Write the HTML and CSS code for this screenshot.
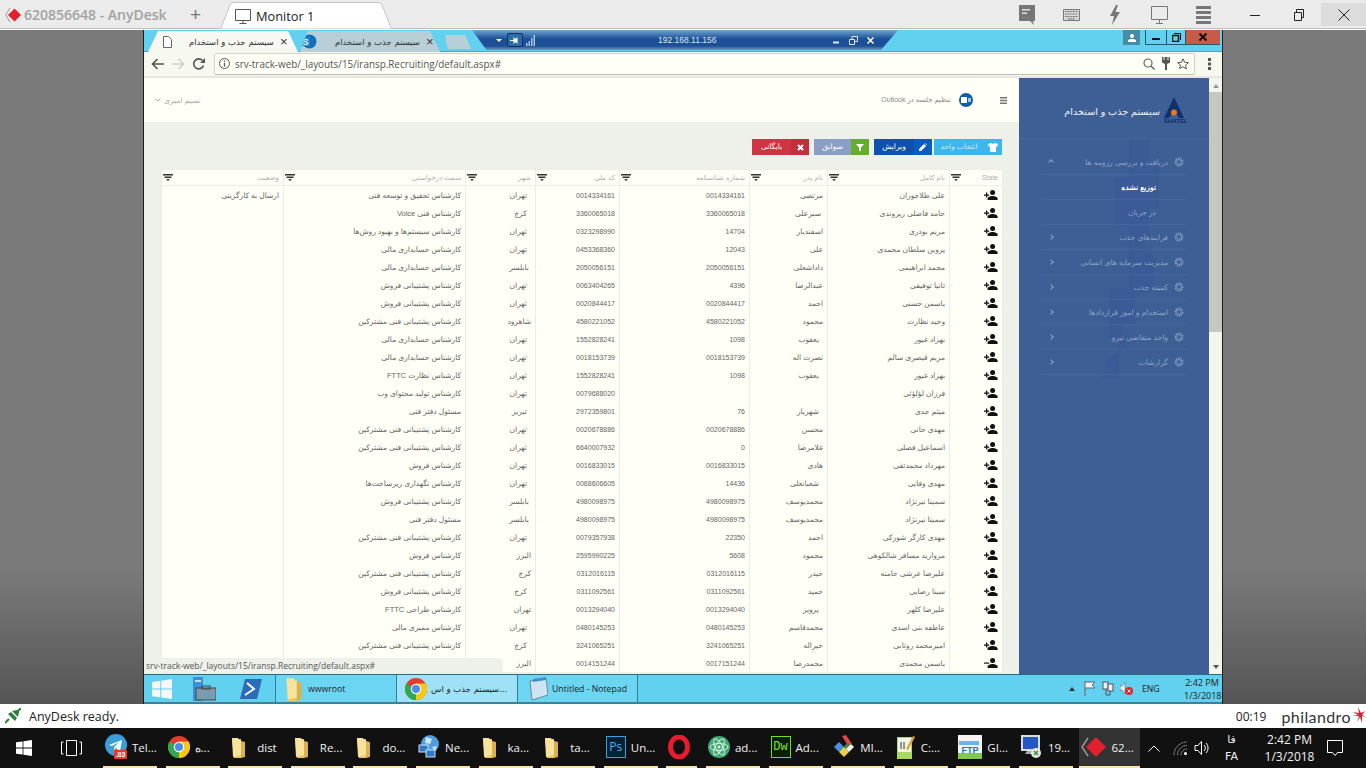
FILE: index.html
```html
<!DOCTYPE html>
<html lang="fa">

<head>
    <meta charset="UTF-8">
    <title>620856648 - AnyDesk</title>
    <link rel="stylesheet" href="styles.css">
</head>

<body>
    <svg class="defs" width="0" height="0">
        <symbol id="add" viewBox="0 0 14 10">
            <circle cx="8.6" cy="2.6" r="2.5" />
            <path d="M3.6 10V8.6c0-1.7 3.3-2.6 5-2.6s5 .9 5 2.6V10z" />
            <path d="M2 2.6h1.3v1.9h1.9v1.2H3.3v1.9H2V5.7H0V4.5h2z" />
        </symbol>
        <symbol id="remove" viewBox="0 0 14 10">
            <circle cx="8.6" cy="2.6" r="2.5" />
            <path d="M3.6 10V8.6c0-1.7 3.3-2.6 5-2.6s5 .9 5 2.6V10z" />
            <path d="M0 4.5h5.2v1.2H0z" />
        </symbol>
        <symbol id="funnel" viewBox="0 0 10 7">
            <path d="M0 0h10v1.5H0zM1.5 2.5h7V4h-7zM3.5 5h3v.8H5.600V7H4.400V5.800h-.9z" />
        </symbol>
        <symbol id="gear" viewBox="0 0 10 10">
            <circle cx="5" cy="5" r="3.6" fill="none" stroke="#8ea2c6" stroke-width="1.6" stroke-dasharray="1.3 .9" />
            <circle cx="5" cy="5" r="2.3" fill="none" stroke="#8ea2c6" stroke-width=".7" />
        </symbol>
        <symbol id="folder" viewBox="0 0 15 21">
            <path d="M1 2h9v19H3z" fill="#e9c766" />
            <path d="M1 1h6l1 2h2v15L2 20z" fill="#f7e39c" />
            <path d="M10 4l4 1v15l-4 1z" fill="#d9b24e" />
        </symbol>
        <symbol id="chrome" viewBox="0 0 24 24">
            <circle cx="12" cy="12" r="12" fill="#e33b2e" />
            <path d="M12 12L1.6 6A12 12 0 0 0 12 24z" fill="#2fa84f" />
            <path d="M12 12V24A12 12 0 0 0 22.4 6z" fill="#fbc80e" />
            <path d="M12 6h10.400A12 12 0 0 1 22.8 10L12 12z" fill="#fbc80e" />
            <circle cx="12" cy="12" r="5.7" fill="#fff" />
            <circle cx="12" cy="12" r="4.4" fill="#4a8bf0" />
        </symbol>
        <symbol id="winlogo" viewBox="0 0 16 16">
            <path d="M0 2.3l6.6-.9v6.2H0zM7.400 1.300L16 0v7.600H7.400zM0 8.400h6.600v6.200L0 13.700zM7.400 8.400H16V16l-8.600-1.300z" />
        </symbol>
    </svg>

    <div class="topbar">
        <div class="ad-title">
            <svg class="ad-logo" width="16" height="16" viewBox="0 0 16 16">
                <path d="M5 1L.7 8 5 15" fill="none" stroke="#999" />
                <path d="M9.5 1.5L16 8l-6.500 6.500L3 8z" fill="#e0202c" />
            </svg>
            <span>620856648 - AnyDesk</span>
        </div>
        <span class="ad-plus">+</span>
        <div class="ad-tab">
            <svg class="ad-tab-bg" width="172" height="27" viewBox="0 0 172 27">
                <path d="M.5 27L10 3q1-2.500 4-2.500h144q3 0 4 2.500l9.500 24z" fill="#fff" stroke="#c4c4c4" />
            </svg>
            <svg class="ad-tab-icon" width="16" height="16" viewBox="0 0 16 16">
                <path d="M.5 1.500h15v11H.5zM8 12.500V15M4.500 15.500h7" fill="none" stroke="#555" />
            </svg>
            <span>Monitor 1</span>
        </div>
        <div class="ad-tools">
            <svg width="16" height="20" viewBox="0 0 16 20">
                <path d="M0 0h16v16h-2l1 4-4-4H0z" fill="#777" />
                <path d="M3 4h8v1.500H3zM3 7.500h5V9H3z" fill="#ddd" />
            </svg>
            <svg width="17" height="12" viewBox="0 0 17 12">
                <path d="M.5.500h16v11H.5z" fill="#d8d8d8" stroke="#777" />
                <path d="M2 2.500h13M2 5h13M2 7.500h13M5 9.800h7" stroke="#666" stroke-dasharray="1 .6" stroke-width="1.2" />
            </svg>
            <svg width="10" height="20" viewBox="0 0 10 20">
                <path d="M6 0L0 11h4l-2 9 8-13H5.500L8 0z" fill="#777" />
            </svg>
            <svg width="17" height="18" viewBox="0 0 17 18">
                <path d="M.5.500h16v13H.5zM8.500 13.500V17M5 17.500h7" fill="none" stroke="#777" />
            </svg>
            <svg width="15" height="18" viewBox="0 0 15 18">
                <path d="M0 0h15v3H0zM0 5h15v3H0zM0 10h15v3H0zM0 15h15v3H0z" fill="#777" />
            </svg>
        </div>
        <div class="ad-win">
            <span class="wbtn"><svg width="10" height="10"><path d="M0 5.500h10" stroke="#222" /></svg></span>
            <span class="wbtn"><svg width="10" height="12" viewBox="0 0 10 12"><path d="M.5 3.500h7v8h-7zM2.500 3.500V.5h7v8H7.500" fill="none" stroke="#222" /></svg></span>
            <span class="wbtn wclose"><svg width="12" height="12"><path d="M.5.500l11 11M11.500.500l-11 11" stroke="#222" /></svg></span>
        </div>
    </div>

    <div class="desk">
        <div class="gray gray-left"></div>
        <div class="remote">
            <div class="strip">
                <div class="tab tab-on">
                    <svg width="9" height="12" viewBox="0 0 9 12">
                        <path d="M.5.500h5l3 3v8h-8z" fill="#fff" stroke="#666" />
                    </svg>
                    <span class="tab-text" dir="rtl">سیستم جذب و استخدام</span>
                    <span class="tab-x">×</span>
                </div>
                <div class="tab tab-off">
                    <svg width="17" height="15" viewBox="0 0 17 15">
                        <circle cx="9.5" cy="7.5" r="7" fill="#0f6fb8" />
                        <rect x="1" y="3" width="9" height="9" fill="#1e86cc" />
                        <text x="5.5" y="10.500" class="t-sp">S</text>
                    </svg>
                    <span class="tab-text" dir="rtl">سیستم جذب و استخدام</span>
                    <span class="tab-x">×</span>
                </div>
                <div class="tab-new"></div>
                <div class="rdp">
                    <span class="rdp-down"></span>
                    <span class="rdp-pin">
                        <svg width="11" height="9" viewBox="0 0 11 9"><path d="M0 4h3.500V1l2 2 2-2v7l-2-2-2 2V5H0zM8 4.500h3" fill="#fff" /></svg>
                    </span>
                    <svg class="rdp-signal" width="9" height="11" viewBox="0 0 9 11">
                        <path d="M0 8h1.500v3H0zM2.500 6H4v5H2.500zM5 3h1.500v8H5zM7.500 0H9v11H7.500z" fill="#a8c8e8" />
                    </svg>
                    <span class="rdp-ip">192.168.11.156</span>
                    <span class="rdp-btns">
                        <svg width="7" height="7"><path d="M0 5.500h6" stroke="#dfe8f4" stroke-width="2" /></svg>
                        <svg width="9" height="9" viewBox="0 0 9 9"><path d="M.5 3.500h5v5h-5zM3 3V.5h5.500v5H6" fill="none" stroke="#dfe8f4" /></svg>
                        <svg width="7" height="7"><path d="M.5.500l6 6M6.500.500l-6 6" stroke="#fff" stroke-width="1.5" /></svg>
                    </span>
                </div>
                <div class="user-btn">
                    <svg width="8" height="8" viewBox="0 0 8 8"><circle cx="4" cy="2" r="2" fill="#fff" /><path d="M0 8V6.500c0-1 2-1.500 4-1.500s4 .5 4 1.500V8z" fill="#fff" /></svg>
                </div>
                <div class="srv-btns">
                    <span class="srv-btn srv-min"><svg width="8" height="8"><path d="M0 6h8" stroke="#111" stroke-width="2" /></svg></span>
                    <span class="srv-btn srv-max"><svg width="9" height="9" viewBox="0 0 9 9"><path d="M.5 2.500h6v6h-6z" fill="none" stroke="#111" stroke-width="1.5" /><path d="M2 .5h6.500V7" fill="none" stroke="#111" /></svg></span>
                    <span class="srv-btn srv-close"><svg width="8" height="8"><path d="M.5.500l7 7M7.500.500l-7 7" stroke="#111" stroke-width="2" /></svg></span>
                </div>
            </div>

            <div class="addr">
                <svg class="nav" width="13" height="12" viewBox="0 0 13 12"><path d="M13 6H2M6.500 1L1.500 6l5 5" fill="none" stroke="#555" stroke-width="1.6" /></svg>
                <svg class="nav" width="13" height="12" viewBox="0 0 13 12"><path d="M0 6h11M6.500 1l5 5-5 5" fill="none" stroke="#cfd2c8" stroke-width="1.6" /></svg>
                <svg class="nav" width="12" height="12" viewBox="0 0 12 12"><path d="M10.500 7.500A5 5 0 1 1 9.500 2.500" fill="none" stroke="#555" stroke-width="1.6" /><path d="M7 5h5V0z" fill="#555" /></svg>
                <div class="url">
                    <svg width="11" height="11" viewBox="0 0 11 11"><circle cx="5.5" cy="5.5" r="5" fill="none" stroke="#555" /><path d="M5.500 2.500v1.200M5.500 4.800v3.600" stroke="#555" stroke-width="1.2" /></svg>
                    <span class="url-text">srv-track-web/_layouts/15/iransp.Recruiting/default.aspx#</span>
                    <span class="url-icons">
                        <svg width="12" height="12" viewBox="0 0 12 12"><circle cx="5" cy="5" r="4" fill="none" stroke="#666" stroke-width="1.2" /><path d="M8 8l3.500 3.500" stroke="#666" stroke-width="1.5" /></svg>
                        <svg width="8" height="13" viewBox="0 0 8 13"><path d="M0 0h1.500v3h1V0h3v3h1V0H8v5.500L5 7v6H3V7L0 5.500z" fill="#555" /></svg>
                        <svg width="12" height="12" viewBox="0 0 12 12"><path d="M6 .8l1.600 3.500 3.800.4-2.800 2.500.8 3.800L6 8.700 2.600 10.600l.8-3.800L.6 4.700l3.800-.4z" fill="none" stroke="#555" /></svg>
                    </span>
                </div>
                <svg class="dots" width="3" height="12" viewBox="0 0 3 12"><path d="M0 0h3v3H0zM0 4.500h3v3H0zM0 9h3v3H0z" fill="#555" /></svg>
            </div>

            <div class="page">
                <div class="main">
                    <div class="head">
                        <div class="head-user" dir="rtl">
                            <span>نسیم امیری</span>
                            <svg width="6" height="4" viewBox="0 0 6 4"><path d="M.5.500L3 3 5.500.500" fill="none" stroke="#aaa" /></svg>
                        </div>
                        <div class="head-right">
                            <span class="head-meet" dir="rtl">تنظیم جلسه در Outlook</span>
                            <svg class="head-out" width="14" height="14" viewBox="0 0 14 14"><circle cx="7" cy="7" r="7" fill="#0f5fa8" /><rect x="2" y="4" width="6" height="6" fill="#fff" /><path d="M9 5h3v4H9z" fill="#9cc8ea" /></svg>
                            <svg class="head-burger" width="7" height="7" viewBox="0 0 7 7"><path d="M0 0h7v1.400H0zM0 2.800h7v1.400H0zM0 5.600h7V7H0z" fill="#777" /></svg>
                        </div>
                    </div>
                    <div class="content">
                        <div class="actions" dir="rtl">
                            <div class="act act-unit">
                                <span class="act-icon"><svg width="10" height="9" viewBox="0 0 10 9"><path d="M0 1l3-1 2 1 2-1 3 1-1 3-1-.5V9H2V3.500L1 4z" fill="#fff" /></svg></span>
                                <span class="act-text">انتخاب واحد</span>
                            </div>
                            <div class="act act-edit">
                                <span class="act-icon"><svg width="8" height="8" viewBox="0 0 8 8"><path d="M0 8V6l5-5 2 2-5 5zM5.700.3l.5-.3L8 1.800l-.3.500z" fill="#fff" /></svg></span>
                                <span class="act-text">ویرایش</span>
                            </div>
                            <div class="act act-hist">
                                <span class="act-icon"><svg width="8" height="7" viewBox="0 0 8 7"><path d="M0 0h8L5 3.500V7H3V3.500z" fill="#fff" /></svg></span>
                                <span class="act-text">سوابق</span>
                            </div>
                            <div class="act act-arch">
                                <span class="act-icon"><svg width="7" height="7" viewBox="0 0 7 7"><path d="M1 1l5 5M6 1L1 6" stroke="#fff" stroke-width="2" /></svg></span>
                                <span class="act-text">بایگانی</span>
                            </div>
                        </div>

                        <table class="grid" dir="rtl">
                            <colgroup>
                                <col class="c-state"><col class="c-name"><col class="c-father"><col class="c-id"><col class="c-code"><col class="c-city"><col class="c-job"><col class="c-status">
                            </colgroup>
                            <thead>
                                <tr>
                                    <th>State<svg class="funnel"><use href="#funnel" /></svg></th>
                                    <th>نام کامل<svg class="funnel"><use href="#funnel" /></svg></th>
                                    <th>نام پدر<svg class="funnel"><use href="#funnel" /></svg></th>
                                    <th>شماره شناسنامه<svg class="funnel"><use href="#funnel" /></svg></th>
                                    <th>کد ملی<svg class="funnel"><use href="#funnel" /></svg></th>
                                    <th>شهر<svg class="funnel"><use href="#funnel" /></svg></th>
                                    <th>سمت درخواستی<svg class="funnel"><use href="#funnel" /></svg></th>
                                    <th>وضعیت<svg class="funnel"><use href="#funnel" /></svg></th>
                                </tr>
                            </thead>
                            <tbody>
                                <tr><td><svg class="act-user"><use href="#add" /></svg></td><td>علی طلاجوران</td><td>مرتضی</td><td>0014334161</td><td>0014334161</td><td>&nbsp;&nbsp;تهران</td><td>کارشناس تحقیق و توسعه فنی</td><td>ارسال به کارگزینی</td></tr>
                                <tr><td><svg class="act-user"><use href="#add" /></svg></td><td>حامد فاضلی ریزوندی</td><td>&nbsp;سبزعلی</td><td>3360065018</td><td>3360065018</td><td>&nbsp;&nbsp;کرج</td><td>کارشناس فنی Voice</td><td></td></tr>
                                <tr><td><svg class="act-user"><use href="#add" /></svg></td><td>مریم بوذری</td><td>اسفندیار</td><td>14704</td><td>0323298990</td><td>&nbsp;&nbsp;تهران</td><td>کارشناس سیستم‌ها و بهبود روش‌ها</td><td></td></tr>
                                <tr><td><svg class="act-user"><use href="#add" /></svg></td><td>پروین سلطان محمدی</td><td>علی</td><td>12043</td><td>0453368360</td><td>&nbsp;&nbsp;تهران</td><td>کارشناس حسابداری مالی</td><td></td></tr>
                                <tr><td><svg class="act-user"><use href="#add" /></svg></td><td>محمد ابراهیمی</td><td>داداشعلی</td><td>2050056151</td><td>2050056151</td><td>&nbsp;بابلسر</td><td>کارشناس حسابداری مالی</td><td></td></tr>
                                <tr><td><svg class="act-user"><use href="#add" /></svg></td><td>تانیا توفیقی</td><td>عبدالرضا</td><td>4396</td><td>0063404265</td><td>&nbsp;&nbsp;تهران</td><td>کارشناس پشتیبانی فروش</td><td></td></tr>
                                <tr><td><svg class="act-user"><use href="#add" /></svg></td><td>یاسمن حسنی</td><td>احمد</td><td>0020844417</td><td>0020844417</td><td>&nbsp;&nbsp;تهران</td><td>کارشناس پشتیبانی فروش</td><td></td></tr>
                                <tr><td><svg class="act-user"><use href="#add" /></svg></td><td>وحید نظارت</td><td>محمود</td><td>4580221052</td><td>4580221052</td><td>شاهرود</td><td>کارشناس پشتیبانی فنی مشترکین</td><td></td></tr>
                                <tr><td><svg class="act-user"><use href="#add" /></svg></td><td>بهزاد غیور</td><td>&nbsp;&nbsp;یعقوب</td><td>1098</td><td>1552828241</td><td>&nbsp;&nbsp;تهران</td><td>کارشناس حسابداری مالی</td><td></td></tr>
                                <tr><td><svg class="act-user"><use href="#add" /></svg></td><td>مریم قیصری سالم</td><td>نصرت اله</td><td>0018153739</td><td>0018153739</td><td>&nbsp;&nbsp;تهران</td><td>کارشناس حسابداری مالی</td><td></td></tr>
                                <tr><td><svg class="act-user"><use href="#add" /></svg></td><td>بهزاد غیور</td><td>&nbsp;&nbsp;یعقوب</td><td>1098</td><td>1552828241</td><td>&nbsp;&nbsp;تهران</td><td>کارشناس نظارت FTTC</td><td></td></tr>
                                <tr><td><svg class="act-user"><use href="#add" /></svg></td><td>فرزان لؤلؤئی</td><td></td><td></td><td>0079688020</td><td>&nbsp;&nbsp;تهران</td><td>کارشناس تولید محتوای وب</td><td></td></tr>
                                <tr><td><svg class="act-user"><use href="#add" /></svg></td><td>میثم جدی</td><td>&nbsp;&nbsp;شهریار</td><td>76</td><td>2972359801</td><td>&nbsp;&nbsp;تبریز</td><td>مسئول دفتر فنی</td><td></td></tr>
                                <tr><td><svg class="act-user"><use href="#add" /></svg></td><td>مهدی خانی</td><td>محسن</td><td>0020678886</td><td>0020678886</td><td>&nbsp;&nbsp;تهران</td><td>کارشناس پشتیبانی فنی مشترکین</td><td></td></tr>
                                <tr><td><svg class="act-user"><use href="#add" /></svg></td><td>اسماعیل فضلی</td><td>غلامرضا</td><td>0</td><td>6640007932</td><td>&nbsp;&nbsp;تهران</td><td>کارشناس پشتیبانی فنی مشترکین</td><td></td></tr>
                                <tr><td><svg class="act-user"><use href="#add" /></svg></td><td>مهرداد محمدتقی</td><td>هادی</td><td>0016833015</td><td>0016833015</td><td>&nbsp;&nbsp;تهران</td><td>کارشناس فروش</td><td></td></tr>
                                <tr><td><svg class="act-user"><use href="#add" /></svg></td><td>مهدی وفایی</td><td>&nbsp;&nbsp;شعبانعلی</td><td>14436</td><td>0068606605</td><td>&nbsp;&nbsp;تهران</td><td>کارشناس نگهداری زیرساخت‌ها</td><td></td></tr>
                                <tr><td><svg class="act-user"><use href="#add" /></svg></td><td>سمینا نیرنژاد</td><td>محمدیوسف</td><td>4980098975</td><td>4980098975</td><td>&nbsp;بابلسر</td><td>کارشناس پشتیبانی فروش</td><td></td></tr>
                                <tr><td><svg class="act-user"><use href="#add" /></svg></td><td>سمینا نیرنژاد</td><td>محمدیوسف</td><td>4980098975</td><td>4980098975</td><td>&nbsp;بابلسر</td><td>مسئول دفتر فنی</td><td></td></tr>
                                <tr><td><svg class="act-user"><use href="#add" /></svg></td><td>مهدی کارگر شورکی</td><td>احمد</td><td>22350</td><td>0079357938</td><td>&nbsp;&nbsp;تهران</td><td>کارشناس پشتیبانی فنی مشترکین</td><td></td></tr>
                                <tr><td><svg class="act-user"><use href="#add" /></svg></td><td>مروارید مسافر شالکوهی</td><td>محمود</td><td>5608</td><td>2595990225</td><td>البرز</td><td>کارشناس فروش</td><td></td></tr>
                                <tr><td><svg class="act-user"><use href="#add" /></svg></td><td>علیرضا عرشی خامنه</td><td>حیدر</td><td>0312016115</td><td>0312016115</td><td>کرج</td><td>کارشناس پشتیبانی فنی مشترکین</td><td></td></tr>
                                <tr><td><svg class="act-user"><use href="#add" /></svg></td><td>سینا رضایی</td><td>حمید</td><td>0311092561</td><td>0311092561</td><td>&nbsp;&nbsp;کرج</td><td>کارشناس پشتیبانی فروش</td><td></td></tr>
                                <tr><td><svg class="act-user"><use href="#add" /></svg></td><td>علیرضا کلهر</td><td>&nbsp;&nbsp;پرویز</td><td>0013294040</td><td>0013294040</td><td>تهران</td><td>کارشناس طراحی FTTC</td><td></td></tr>
                                <tr><td><svg class="act-user"><use href="#add" /></svg></td><td>عاطفه بنی اسدی</td><td>محمدقاسم</td><td>0480145253</td><td>0480145253</td><td>&nbsp;&nbsp;تهران</td><td>کارشناس ممیزی مالی</td><td></td></tr>
                                <tr><td><svg class="act-user"><use href="#add" /></svg></td><td>امیرمحمد روتابی</td><td>خیراله</td><td>3241065251</td><td>3241065251</td><td>&nbsp;&nbsp;کرج</td><td>کارشناس پشتیبانی فنی مشترکین</td><td></td></tr>
                                <tr><td><svg class="act-user"><use href="#remove" /></svg></td><td>یاسمن محمدی</td><td>محمدرضا</td><td>0017151244</td><td>0014151244</td><td>البرز</td><td></td><td></td></tr>
                            </tbody>
                        </table>
                    </div>
                </div>

                <div class="sidebar" dir="rtl">
                    <svg class="side-mark" width="80" height="240" viewBox="0 0 80 240">
                        <path d="M50 0h20v30h10v40H70v30h-8l14 20v30l-20 6v30h-14l6 24-18 10-8 20H40v-40H30v-50h20V90H36V40h14z" fill="#3b5a97" />
                    </svg>
                    <div class="side-head">
                        <div class="logo">
                            <svg width="20" height="21" viewBox="0 0 20 21">
                                <path d="M10 0l10 21h-5l-5-8-5 8H0z" fill="#12306e" />
                                <circle cx="10" cy="15.500" r="3" fill="#f0761e" />
                            </svg>
                            <span class="logo-text">SHATEL</span>
                        </div>
                        <span class="side-title">سیستم جذب و استخدام</span>
                    </div>
                    <ul class="menu">
                        <li><svg class="gear"><use href="#gear" /></svg><span>دریافت و بررسی رزومه ها</span><i class="chev chev-up"></i></li>
                        <li class="sub sub-on"><span>توزیع نشده</span></li>
                        <li class="sub"><span>در جریان</span></li>
                        <li><svg class="gear"><use href="#gear" /></svg><span>فرایندهای جذب</span><i class="chev"></i></li>
                        <li><svg class="gear"><use href="#gear" /></svg><span>مدیریت سرمایه های انسانی</span><i class="chev"></i></li>
                        <li><svg class="gear"><use href="#gear" /></svg><span>کمیته جذب</span><i class="chev"></i></li>
                        <li><svg class="gear"><use href="#gear" /></svg><span>استخدام و امور قراردادها</span><i class="chev"></i></li>
                        <li><svg class="gear"><use href="#gear" /></svg><span>واحد متقاضی نیرو</span><i class="chev"></i></li>
                        <li><svg class="gear"><use href="#gear" /></svg><span>گزارشات</span><i class="chev"></i></li>
                    </ul>
                </div>

                <div class="vscroll">
                    <span class="arrow arrow-up"></span>
                    <div class="thumb"></div>
                    <span class="arrow arrow-down"></span>
                </div>

                <div class="bubble">srv-track-web/_layouts/15/iransp.Recruiting/default.aspx#</div>
            </div>

            <div class="srvbar">
                <div class="srv-start">
                    <svg class="srv-win" width="20" height="20"><use href="#winlogo" /></svg>
                    <svg width="24" height="24" viewBox="0 0 24 24">
                        <rect x="1" y="0" width="10" height="24" fill="#3a8fd8" />
                        <rect x="3" y="3" width="6" height="2" fill="#bfe0f8" />
                        <rect x="4" y="11" width="20" height="12" fill="#7a9ab0" stroke="#444" />
                        <rect x="10" y="9" width="8" height="3" fill="none" stroke="#444" />
                    </svg>
                    <svg class="srv-ps" width="22" height="22" viewBox="0 0 22 22">
                        <path d="M5 1h17l-5 20H0z" fill="#2a6cb8" />
                        <path d="M7 5l7 6-9 6" fill="none" stroke="#fff" stroke-width="2" />
                    </svg>
                </div>
                <div class="srv-task srv-task-a">
                    <svg width="20" height="24"><use href="#folder" /></svg>
                    <span>wwwroot</span>
                </div>
                <div class="srv-task srv-task-b">
                    <svg width="22" height="22"><use href="#chrome" /></svg>
                    <span class="srv-task-rtl">سیستم جذب و اس...</span>
                </div>
                <div class="srv-task srv-task-a srv-task-last">
                    <svg width="22" height="24" viewBox="0 0 22 24">
                        <path d="M4 4L20 1l2 17L6 23z" fill="#cfe4f2" stroke="#6a8aa0" />
                        <path d="M7 2l13-2v3L7 5z" fill="#3f8fc8" />
                    </svg>
                    <span>Untitled - Notepad</span>
                </div>
                <div class="srv-tray">
                    <span class="tray-caret"></span>
                    <svg width="12" height="15" viewBox="0 0 12 15"><path d="M1 0v15M1 1h10L8 4l3 3H1" fill="#f4f4f4" stroke="#667" /></svg>
                    <svg width="12" height="15" viewBox="0 0 12 15"><rect x="1" y="1" width="5" height="7" fill="#eee" stroke="#556" /><rect x="6" y="3" width="5" height="7" fill="#eee" stroke="#556" /><path d="M4 8v6h4v-4" fill="none" stroke="#556" /></svg>
                    <svg width="13" height="15" viewBox="0 0 13 15"><path d="M0 5h2l3-4v12l-3-4H0z" fill="#eee" stroke="#667" stroke-width=".6" /><circle cx="9" cy="10" r="4" fill="#d8262c" /><path d="M7.500 8.500l3 3M10.500 8.500l-3 3" stroke="#fff" /></svg>
                    <span class="tray-lang">ENG</span>
                    <span class="tray-clock">2:42 PM<br>1/3/2018</span>
                </div>
            </div>
        </div>
        <div class="gray gray-right"></div>
    </div>

    <div class="status">
        <svg width="16" height="16" viewBox="0 0 16 16">
            <path d="M0 15l4-4M12 4l4-4" stroke="#2f7d3a" stroke-width="2" />
            <path d="M3 6l7 7 2-3-6-6zM7 3l6 6 1-5-2-2z" fill="#2f7d3a" />
        </svg>
        <span class="status-text">AnyDesk ready.</span>
        <span class="status-time">00:19</span>
        <span class="philandro">philandro</span>
        <svg width="15" height="18" viewBox="0 0 15 18">
            <path d="M7 0l1 6-6-1 5 3-6 1 7 0-2 6 3-5 2 6V9l4 1-4-2 3-4-4 2z" fill="#d8202a" />
        </svg>
    </div>

    <div class="winbar">
        <div class="win-start"><svg width="16" height="16" fill="#fff"><use href="#winlogo" /></svg></div>
        <div class="win-view">
            <svg width="21" height="16" viewBox="0 0 21 16"><path d="M5.500.5h10v15h-10zM2.500 2H.5v12h2M18.500 2h2v12h-2" fill="none" stroke="#fff" /></svg>
        </div>
        <div class="tasks">
            <div class="task">
                <svg class="t-icon" width="22" height="26" viewBox="0 0 22 26">
                    <circle cx="11" cy="11" r="11" fill="#3a9fd8" />
                    <path d="M4 11l13-5-2 11-4-3-2 2v-3l5-5-7 4z" fill="#fff" />
                    <rect x="9" y="16" width="13" height="9" rx="1" fill="#e8392e" />
                    <text x="15.500" y="23" class="t-badge">.83</text>
                </svg>
                <span>Tel...</span>
            </div>
            <div class="task"><svg class="t-icon" width="22" height="22"><use href="#chrome" /></svg><span>ه...</span></div>
            <div class="task"><svg class="t-folder" width="15" height="21"><use href="#folder" /></svg><span>dist</span></div>
            <div class="task"><svg class="t-folder" width="15" height="21"><use href="#folder" /></svg><span>Re...</span></div>
            <div class="task"><svg class="t-folder" width="15" height="21"><use href="#folder" /></svg><span>do...</span></div>
            <div class="task">
                <svg class="t-icon" width="22" height="24" viewBox="0 0 22 24">
                    <circle cx="12" cy="9" r="9" fill="#4f9fe0" />
                    <path d="M8 2l6 2-2 5-5-1zM14 12l5-1-2 5z" fill="#cfe6f8" />
                    <rect x="1" y="10" width="9" height="7" fill="#2d7cc8" stroke="#cfe0ee" />
                    <rect x="8" y="15" width="9" height="7" fill="#2d7cc8" stroke="#cfe0ee" />
                </svg>
                <span>Ne...</span>
            </div>
            <div class="task"><svg class="t-folder" width="15" height="21"><use href="#folder" /></svg><span>ka...</span></div>
            <div class="task"><svg class="t-folder" width="15" height="21"><use href="#folder" /></svg><span>ta...</span></div>
            <div class="task"><span class="ps">Ps</span><span>Un...</span></div>
            <div class="task task-opera">
                <svg class="t-icon" width="22" height="24" viewBox="0 0 22 24"><ellipse cx="11" cy="12" rx="8.5" ry="10" fill="none" stroke="#e81c2e" stroke-width="5" /></svg>
            </div>
            <div class="task">
                <svg class="t-icon" width="22" height="24" viewBox="0 0 22 24">
                    <circle cx="11" cy="12" r="11" fill="#3fa875" />
                    <g fill="none" stroke="#dff5e6" stroke-width=".9">
                        <ellipse cx="11" cy="12" rx="9" ry="3.5" />
                        <ellipse cx="11" cy="12" rx="9" ry="3.5" transform="rotate(60 11 12)" />
                        <ellipse cx="11" cy="12" rx="9" ry="3.5" transform="rotate(120 11 12)" />
                    </g>
                    <circle cx="11" cy="12" r="1.5" fill="#dff5e6" />
                </svg>
                <span>ad...</span>
            </div>
            <div class="task"><span class="dw">Dw</span><span>Ad...</span></div>
            <div class="task">
                <svg class="t-icon" width="22" height="24" viewBox="0 0 22 24">
                    <path d="M6 7l5 5-5 5-5-5z" fill="#4a90e0" />
                    <path d="M11 12l5 5-5 5-5-5z" fill="#f0d040" />
                    <path d="M16 7l5 5-5 5-5-5z" fill="#f4f4f4" />
                    <path d="M9 1l4-1 6 9-4 2z" fill="#e04848" />
                    <path d="M11 12l4-4 2 2-4 4z" fill="#3a8a3a" />
                </svg>
                <span>MI...</span>
            </div>
            <div class="task">
                <svg class="t-icon" width="20" height="24" viewBox="0 0 20 24">
                    <path d="M1 2h15v22H1z" fill="#a8d860" />
                    <path d="M2 3h13v14H2z" fill="#f4f4e4" />
                    <path d="M5 7v7M8 7v7" stroke="#333" />
                    <path d="M10 14L17 1l2 1-7 13z" fill="#e0a030" />
                </svg>
                <span>C:...</span>
            </div>
            <div class="task">
                <svg class="t-icon" width="24" height="24" viewBox="0 0 24 24">
                    <rect width="24" height="24" fill="#f4f4f4" />
                    <path d="M1 6h20v4H1z" fill="#6fb0e8" />
                    <path d="M0 18h24v6H0z" fill="#80c850" />
                    <text x="12" y="18" class="t-ftp">FTP</text>
                </svg>
                <span>GI...</span>
            </div>
            <div class="task">
                <svg class="t-icon" width="22" height="24" viewBox="0 0 22 24">
                    <rect x="0" y="0" width="19" height="16" fill="#d8dce4" />
                    <rect x="2" y="2" width="15" height="12" fill="#2458c0" />
                    <path d="M6 16h7l2 3H4z" fill="#a8acb4" />
                    <circle cx="15" cy="18" r="5" fill="#e8e8e8" />
                    <path d="M13 16l4 4M17 16l-4 4" stroke="#3a8a3a" stroke-width="1.5" />
                </svg>
                <span>19...</span>
            </div>
            <div class="task task-on">
                <svg class="t-icon" width="26" height="22" viewBox="0 0 26 22">
                    <path d="M7 2L1 11l6 9" fill="none" stroke="#999" stroke-width="1.5" />
                    <path d="M15 1l10 10-10 10L5 11z" fill="#e0202c" />
                </svg>
                <span>62...</span>
            </div>
        </div>
        <div class="tray">
            <span class="tray-item tray-up"><svg width="12" height="7" viewBox="0 0 12 7"><path d="M.5 6.500L6 1l5.500 5.500" fill="none" stroke="#fff" /></svg></span>
            <span class="tray-item tray-wifi">
                <svg width="14" height="14" viewBox="0 0 14 14"><path d="M1 14A13 13 0 0 1 14 1M4.500 14A9.500 9.500 0 0 1 14 4.500M8 14a6 6 0 0 1 6-6" fill="none" stroke="#ccc" stroke-dasharray="1 .7" /><circle cx="12.5" cy="12.5" r="1.5" fill="#fff" /></svg>
            </span>
            <span class="tray-item tray-vol">
                <svg width="16" height="16" viewBox="0 0 16 16"><path d="M1 5.500h3l3.500-4v13l-3.500-4H1z" fill="none" stroke="#fff" /><path d="M10 5a4 4 0 0 1 0 6M12 3a7 7 0 0 1 0 10" fill="none" stroke="#fff" /></svg>
            </span>
            <span class="tray-item tray-fa"><span>فا</span><span>FA</span></span>
            <span class="tray-item tray-time">2:42 PM<br>1/3/2018</span>
            <span class="tray-item tray-note">
                <svg width="16" height="16" viewBox="0 0 16 16"><path d="M.5.500h15v12h-5l-2.500 3-2.500-3h-5z" fill="none" stroke="#fff" /></svg>
            </span>
        </div>
    </div>
</body>

</html>
```

FILE: styles.css
```css
html, body {
    margin: 0;
    padding: 0;
    height: 768px;
    overflow: hidden;
}

body {
    font-family: "Liberation Sans", "DejaVu Sans", sans-serif;
    background-color: #111;
    display: flex;
    flex-direction: column;
}

.defs {
    display: block;
    height: 0;
}

svg {
    display: block;
    flex-shrink: 0;
}

/* AnyDesk top bar */
.topbar {
    height: 29px;
    flex-shrink: 0;
    display: flex;
    align-items: center;
    background-color: #ebebeb;
    border-bottom: 1px solid #fff;
    box-shadow: inset 0 -1px 0 #bdbdbd;
}

.ad-title {
    display: flex;
    align-items: center;
    gap: 3px;
    width: 183px;
    padding-left: 5px;
    box-sizing: border-box;
    color: #a2a2a2;
    font-family: "Open Sans", sans-serif;
    font-size: 14px;
    font-weight: 600;
    white-space: nowrap;
}

.ad-plus {
    width: 37px;
    color: #777;
    font-size: 19px;
    padding-left: 7px;
    box-sizing: border-box;
}

.ad-tab {
    position: relative;
    width: 172px;
    height: 29px;
    display: flex;
    align-items: center;
    gap: 5px;
    padding: 3px 0 0 15px;
    box-sizing: border-box;
    font-family: "Open Sans", sans-serif;
    font-size: 12.8px;
    color: #222;
}

.ad-tab-bg {
    position: absolute;
    left: 0;
    top: 2px;
}

.ad-tab-icon,
.ad-tab span {
    position: relative;
}

.ad-tools {
    margin-left: auto;
    display: grid;
    grid-template-columns: repeat(5, 44px);
    justify-items: center;
    align-items: center;
}

.ad-win {
    display: flex;
    align-items: center;
    margin-left: 8px;
}

.wbtn {
    width: 44px;
    height: 23px;
    display: flex;
    align-items: center;
    justify-content: center;
}

.wclose {
    width: 45px;
    background-color: #dcdcdc;
}

/* middle part with the remote screen */
.desk {
    height: 674px;
    flex-shrink: 0;
    display: flex;
}

.gray {
    flex: 1;
    background: linear-gradient(#7a7a7a, #7a7a7a 80%, #555);
}

.gray-left {
    border-right: 1px solid #1c1c1c;
}

.gray-right {
    border-left: 1px solid #1c1c1c;
}

.remote {
    width: 1078px;
    flex-shrink: 0;
    display: flex;
    flex-direction: column;
}

.strip {
    height: 22px;
    flex-shrink: 0;
    display: flex;
    background-color: #62d0ef;
    border-bottom: 1px solid #4aa6c2;
    box-sizing: border-box;
    padding-left: 4px;
    font-size: 9.5px;
}

.tab {
    height: 21px;
    display: flex;
    align-items: center;
    margin-top: 1px;
}

.tab-on {
    width: 150px;
    background-color: #f7f8f2;
    clip-path: polygon(0 100%, 10px 0, 140px 0, 100% 100%);
    padding-left: 15px;
    box-sizing: border-box;
}

.tab-off {
    width: 140px;
    margin-left: 2px;
    background-color: #b9cfd8;
    clip-path: polygon(0 100%, 8px 0, 130px 0, 100% 100%);
    box-sizing: border-box;
}

.t-sp {
    font-size: 9px;
    font-weight: bold;
    fill: #fff;
    text-anchor: middle;
}

.tab-text {
    width: 86px;
    white-space: nowrap;
    color: #333;
    font-family: "DejaVu Sans", sans-serif;
    font-size: 8.5px;
}

.tab-on .tab-text {
    margin-left: 16px;
}

.tab-off .tab-text {
    margin-left: 17px;
}

.tab-x {
    margin-left: 6px;
    font-size: 13px;
    line-height: 13px;
    color: #333;
}

.tab-new {
    width: 26px;
    height: 14px;
    margin: 5px 0 0 5px;
    background-color: #b9cfd8;
    clip-path: polygon(0 0, 78% 0, 100% 100%, 10% 100%);
}

.rdp {
    width: 426px;
    height: 20px;
    margin-left: 1px;
    display: flex;
    align-items: center;
    background: linear-gradient(#6fa4cf, #1b4f96 45%, #1b4f96 80%, #7a96b8);
    clip-path: polygon(0 0, 100% 0, 96% 100%, 3.4% 100%);
    color: #dfe8f4;
    font-size: 8.5px;
    padding-left: 24px;
    box-sizing: border-box;
}

.rdp-down {
    width: 0;
    height: 0;
    border-left: 3px solid transparent;
    border-right: 3px solid transparent;
    border-top: 3px solid #fff;
}

.rdp-pin {
    width: 16px;
    height: 14px;
    margin-left: 5px;
    display: flex;
    align-items: center;
    justify-content: center;
    border: 1px solid #0d2f66;
    border-radius: 2px;
    box-sizing: border-box;
    background-color: #2d6aa8;
}

.rdp-signal {
    margin-left: 3px;
}

.rdp-ip {
    margin-left: 123px;
}

.rdp-btns {
    margin-left: 117px;
    display: flex;
    align-items: center;
    gap: 9px;
}

.user-btn {
    width: 17px;
    height: 15px;
    margin-left: 225px;
    display: flex;
    align-items: center;
    justify-content: center;
    background-color: #468ba8;
}

.srv-btns {
    display: flex;
    margin-left: 5px;
    height: 15px;
}

.srv-btn {
    display: flex;
    align-items: center;
    justify-content: center;
    box-sizing: border-box;
    border-bottom: 1px solid #27556a;
    border-left: 1px solid #27556a;
}

.srv-min {
    width: 21px;
}

.srv-max {
    width: 19px;
}

.srv-close {
    width: 35px;
    background-color: #c75b4a;
}

.addr {
    height: 26px;
    flex-shrink: 0;
    display: flex;
    align-items: center;
    box-sizing: border-box;
    padding: 0 0 1px 7px;
    background-color: #f7f8f0;
    border-bottom: 2px solid #ece3e3;
}

.addr .nav {
    margin-right: 8px;
}

.url {
    flex: 1;
    height: 22px;
    margin-left: 1px;
    display: flex;
    align-items: center;
    box-sizing: border-box;
    padding: 0 5px 0 4px;
    background-color: #fffff8;
    border: 1px solid #d0d2c8;
    border-bottom-color: #b9bcb0;
    border-radius: 2px;
}

.url-text {
    margin-left: 5px;
    font-family: "Open Sans", sans-serif;
    font-size: 9.9px;
    color: #555;
    white-space: nowrap;
}

.url-icons {
    margin-left: auto;
    display: flex;
    align-items: center;
    gap: 7px;
}

.dots {
    margin: 0 11px 0 13px;
}

/* the page itself */
.page {
    position: relative;
    height: 596px;
    flex-shrink: 0;
    display: flex;
    overflow: hidden;
    background-color: #eef1ea;
}

.main {
    flex: 1;
    min-width: 0;
}

.head {
    height: 44px;
    display: flex;
    align-items: center;
    justify-content: space-between;
    background-color: #fffff8;
    padding: 0 12px 0 11px;
}

.head-user {
    display: flex;
    align-items: center;
    gap: 3px;
    color: #aaa;
    font-size: 7.5px;
}

.head-right {
    display: flex;
    align-items: center;
    gap: 5px;
}

.head-meet {
    color: #888;
    font-size: 7px;
    white-space: nowrap;
}

.head-out {
    margin-left: 3px;
}

.head-burger {
    margin-left: 22px;
}

.content {
    padding: 17px 17px 0;
}

.actions {
    display: flex;
    height: 16px;
    margin-bottom: 14px;
}

.act {
    display: flex;
    height: 16px;
    color: #fff;
    font-size: 7.5px;
    line-height: 16px;
}

.act-icon {
    width: 18px;
    display: flex;
    align-items: center;
    justify-content: center;
}

.act-text {
    flex: 1;
    text-align: center;
    white-space: nowrap;
}

.act-unit {
    width: 68px;
    margin-left: 2px;
    background-color: #3cb6ec;
}

.act-unit .act-text {
    color: #cfeefb;
}

.act-edit {
    width: 58px;
    margin-left: 5px;
    background-color: #0d52ac;
}

.act-edit .act-icon {
    background-color: #0a5cc0;
}

.act-hist {
    width: 55px;
    margin-left: 5px;
    background-color: #8a9fc6;
}

.act-hist .act-icon {
    background-color: #66ae28;
}

.act-arch {
    width: 57px;
    background-color: #cf3442;
}

.act-arch .act-icon {
    background-color: #c22e3c;
}

.grid {
    width: 841px;
    table-layout: fixed;
    border-collapse: collapse;
    background-color: #fffff8;
    color: #666;
    font-size: 7.5px;
}

.c-state { width: 53px; }
.c-name { width: 122px; }
.c-father { width: 78px; }
.c-id { width: 130px; }
.c-code { width: 84px; }
.c-city { width: 70px; }
.c-job { width: 182px; }
.c-status { width: 122px; }

.grid th {
    height: 15px;
    padding: 0 4px 0 0;
    font-size: 7px;
    font-weight: normal;
    color: #b0b0b0;
    text-align: right;
    border: 1px solid #eceee6;
    position: relative;
}

.grid td {
    height: 18px;
    padding: 0 4px 0 0;
    white-space: nowrap;
    overflow: hidden;
    border-left: 1px solid #eceee6;
    border-right: 1px solid #eceee6;
}

.grid td:nth-child(4),
.grid td:nth-child(5) {
    font-size: 7px;
}

.funnel {
    position: absolute;
    left: 1px;
    top: 4px;
    width: 10px;
    height: 7px;
    fill: #333;
}

.act-user {
    width: 14px;
    height: 10px;
    fill: #111;
}

.sidebar {
    position: relative;
    width: 190px;
    flex-shrink: 0;
    background-color: #3d5f96;
    overflow: hidden;
}

.side-mark {
    position: absolute;
    left: 60px;
    top: 60px;
}

.side-head {
    position: relative;
    height: 61px;
    box-sizing: border-box;
    padding: 19px 25px 0 0;
    display: flex;
    align-items: flex-start;
    gap: 4px;
    border-bottom: 1px solid #46669e;
}

.logo {
    width: 20px;
}

.logo-text {
    display: block;
    font-size: 6px;
    font-weight: bold;
    color: #102a66;
    direction: ltr;
    line-height: 7px;
}

.side-title {
    margin-top: 9px;
    color: #f2f4f8;
    font-size: 9.7px;
    white-space: nowrap;
}

.menu {
    position: relative;
    list-style-type: none;
    margin: 0 22px 0 22px;
    padding: 11px 0 0;
    color: #8ea2c6;
    font-size: 7.6px;
}

.menu li {
    height: 25px;
    display: flex;
    align-items: center;
    gap: 6px;
    padding: 0 3px 0 8px;
    box-sizing: border-box;
    border-bottom: 1px solid #46669e;
}

.menu .sub {
    padding-right: 31px;
}

.menu .sub-on {
    color: #fff;
    text-shadow: 0 0 .5px #fff;
}

.gear {
    width: 10px;
    height: 10px;
}

.chev {
    margin-right: auto;
    width: 3px;
    height: 3px;
    border-left: 1px solid #8ea2c6;
    border-bottom: 1px solid #8ea2c6;
    transform: rotate(225deg);
}

.chev-up {
    transform: rotate(135deg);
}

.vscroll {
    width: 13px;
    flex-shrink: 0;
    display: flex;
    flex-direction: column;
    align-items: center;
    background-color: #f4f5ed;
}

.thumb {
    width: 100%;
    height: 240px;
    margin-top: 4px;
    background-color: #c5c8bd;
}

.arrow {
    width: 0;
    height: 0;
    border-left: 3px solid transparent;
    border-right: 3px solid transparent;
}

.arrow-up {
    margin-top: 6px;
    border-bottom: 4px solid #999;
}

.arrow-down {
    margin-top: auto;
    margin-bottom: 5px;
    border-top: 4px solid #555;
}

.bubble {
    position: absolute;
    left: 0;
    bottom: 0;
    width: 359px;
    height: 16px;
    box-sizing: border-box;
    padding-left: 2px;
    background-color: #eef1ea;
    border-top-right-radius: 4px;
    font-family: "Open Sans", sans-serif;
    font-size: 8.5px;
    line-height: 16px;
    color: #555;
}

/* taskbar of the remote server */
.srvbar {
    height: 30px;
    flex-shrink: 0;
    display: flex;
    box-sizing: border-box;
    background-color: #62d0ef;
    border-top: 1px solid #2b6a80;
    border-bottom: 2px solid #3c8196;
    font-family: "Open Sans", sans-serif;
    font-size: 8.7px;
    color: #222;
}

.srv-start {
    width: 131px;
    display: flex;
    align-items: center;
    gap: 20px;
    box-sizing: border-box;
    padding-left: 8px;
}

.srv-win {
    fill: #f4f8fa;
}

.srv-ps {
    margin-left: 4px;
}

.srv-task {
    width: 121px;
    box-sizing: border-box;
    display: flex;
    align-items: center;
    gap: 4px;
    padding-left: 8px;
    border-left: 1px solid #2f7d98;
}

.srv-task-last {
    border-right: 1px solid #2f7d98;
}

.srv-task-a {
    background-color: #6cd5f2;
}

.srv-task-b {
    background-color: #9fe2f8;
}

.srv-task-rtl {
    font-family: "DejaVu Sans", sans-serif;
    font-size: 8.5px;
    white-space: nowrap;
}

.srv-tray {
    margin-left: auto;
    display: flex;
    align-items: center;
    gap: 6px;
    padding-right: 2px;
}

.tray-caret {
    width: 0;
    height: 0;
    margin-right: 3px;
    border-left: 3px solid transparent;
    border-right: 3px solid transparent;
    border-bottom: 4px solid #333;
}

.tray-lang {
    margin: 0 19px 0 3px;
    width: 17px;
    white-space: nowrap;
}

.tray-clock {
    width: 36px;
    text-align: center;
    line-height: 13px;
    font-size: 9px;
    white-space: nowrap;
}

/* AnyDesk status line */
.status {
    height: 24px;
    flex-shrink: 0;
    display: flex;
    align-items: center;
    background-color: #fff;
    padding-left: 5px;
    color: #222;
    font-family: "Open Sans", sans-serif;
}

.status-text {
    margin-left: 8px;
    font-size: 12.5px;
}

.status-time {
    margin-left: auto;
    font-size: 12px;
}

.philandro {
    margin-left: 15px;
    font-family: "Lato", sans-serif;
    font-size: 16px;
    color: #333;
    letter-spacing: .4px;
}

/* windows taskbar of the local machine */
.winbar {
    height: 40px;
    flex-shrink: 0;
    display: flex;
    background-color: #111;
    color: #f2f2f2;
    font-family: "Open Sans", sans-serif;
    font-size: 11.5px;
}

.win-start {
    width: 48px;
    display: flex;
    align-items: center;
    justify-content: center;
}

.win-view {
    width: 47px;
    display: flex;
    align-items: center;
    justify-content: center;
}

.tasks {
    display: flex;
    gap: 8.6px;
    margin-left: 8px;
}

.task {
    width: 54px;
    display: flex;
    align-items: center;
    gap: 5px;
    padding-left: 2px;
    box-sizing: border-box;
    border-bottom: 2px solid #f5e6b0;
    white-space: nowrap;
}

.t-folder {
    margin-left: 1px;
    margin-right: 6px;
}

.t-badge {
    font-family: "Liberation Sans", sans-serif;
    font-size: 7px;
    font-weight: bold;
    fill: #fff;
    text-anchor: middle;
}

.t-ftp {
    font-family: "Liberation Sans", sans-serif;
    font-size: 9px;
    font-weight: bold;
    fill: #2a70c0;
    text-anchor: middle;
}

.task-opera {
    width: 31px;
}

.task-on {
    width: 61px;
    margin-left: -3px;
    background-color: #333;
}

.ps,
.dw {
    width: 20px;
    height: 22px;
    flex-shrink: 0;
    box-sizing: border-box;
    font-size: 12px;
    line-height: 20px;
    text-align: center;
}

.ps {
    background-color: #061f33;
    border: 1px solid #2fa4e0;
    color: #45b4f0;
}

.dw {
    background-color: #0d1f08;
    border: 1px solid #6ee01a;
    color: #7be82a;
    font-family: "Liberation Mono", monospace;
}

.tray {
    display: flex;
}

.tray-item {
    display: flex;
    align-items: center;
    justify-content: center;
}

.tray-up { width: 28px; }
.tray-wifi { width: 24px; }
.tray-vol { width: 20px; }

.tray-fa {
    width: 40px;
    flex-direction: column;
    line-height: 17px;
    font-family: "DejaVu Sans", sans-serif;
    font-size: 11px;
}

.tray-time {
    width: 76px;
    text-align: center;
    line-height: 17px;
    font-size: 12px;
}

.tray-note {
    width: 14px;
}
```
